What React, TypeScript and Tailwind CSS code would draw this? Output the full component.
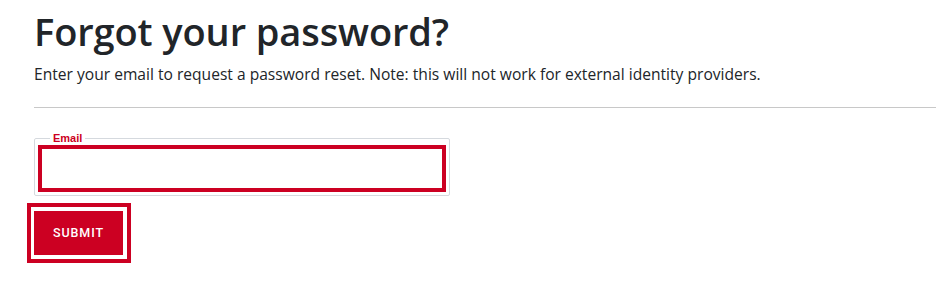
export default function App() {
  return (
    <div className="min-h-[287px] bg-white pl-[34px] pt-[8px] text-[#212529] font-['Open_Sans','Noto_Sans',sans-serif]">
      <h1 className="text-[38px] leading-[46px] font-semibold tracking-[-0.1px]">Forgot your password?</h1>
      <p className="mt-[9px] text-[15.6px] leading-[22px]">
        Enter your email to request a password reset. Note: this will not work for external identity providers.
      </p>
      <hr className="mt-[22px] border-t border-[#c8c8c8]" />

      <form className="mt-[25px] flex flex-col items-start" onSubmit={(e) => e.preventDefault()}>
        <fieldset className="w-[416px] rounded-[2px] border border-[#d5d9de] px-[3px] pb-[3px]">
          <legend className="ml-[12px] px-[3px] text-[11px] leading-[11px] font-bold text-[#cc0022] font-['Liberation_Sans',sans-serif]">
            Email
          </legend>
          <input
            type="email"
            className="mt-[1px] block h-[47px] w-full border-[4px] border-[#cc0022] bg-white px-2 outline-none"
          />
        </fieldset>

        <div className="mt-[7px] -ml-[7px] border-[4px] border-[#cc0022] py-[4px] pl-[3px] pr-[4px]">
          <button
            type="submit"
            className="flex h-[44px] w-[89px] items-center justify-center bg-[#cc0022] text-[12.5px] font-medium tracking-[0.9px] text-white font-['Roboto',sans-serif]"
          >
            SUBMIT
          </button>
        </div>
      </form>
    </div>
  );
}
